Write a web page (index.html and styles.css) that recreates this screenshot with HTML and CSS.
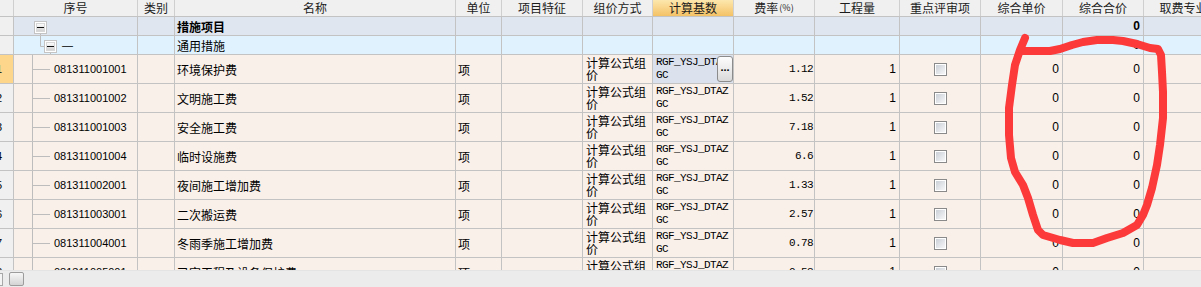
FILE: index.html
```html
<!DOCTYPE html>
<html lang="zh-CN">
<head>
    <meta charset="UTF-8">
    <title>措施项目</title>
    <link rel="stylesheet" href="styles.css">
</head>
<body>
    <div class="grid">
        <div class="row head">
            <div class="cell num"></div>
            <div class="cell">序号</div>
            <div class="cell">类别</div>
            <div class="cell">名称</div>
            <div class="cell">单位</div>
            <div class="cell">项目特征</div>
            <div class="cell">组价方式</div>
            <div class="cell active">计算基数</div>
            <div class="cell">费率<small>(%)</small></div>
            <div class="cell">工程量</div>
            <div class="cell">重点评审项</div>
            <div class="cell">综合单价</div>
            <div class="cell">综合合价</div>
            <div class="cell">取费专业</div>
        </div>

        <div class="row group">
            <div class="cell num"></div>
            <div class="cell code tree">
                <svg width="40" height="18" viewBox="0 0 40 18">
                    <defs>
                        <linearGradient id="btn1" x1="0" y1="0" x2="0" y2="1">
                            <stop offset="0" stop-color="#ffffff"/>
                            <stop offset="1" stop-color="#cfcfcf"/>
                        </linearGradient>
                    </defs>
                    <line x1="8.5" y1="16" x2="8.5" y2="18" stroke="#bdbdbd"/>
                    <rect x="2.5" y="4.5" width="12" height="12" fill="#fff" stroke="#c4c4c4"/>
                    <rect x="4.5" y="6.5" width="8" height="8" fill="url(#btn1)" stroke="#d8d8d8"/>
                    <line x1="5" y1="10.5" x2="12" y2="10.5" stroke="#111"/>
                </svg>
            </div>
            <div class="cell"></div>
            <div class="cell name"><b>措施项目</b></div>
            <div class="cell"></div>
            <div class="cell"></div>
            <div class="cell"></div>
            <div class="cell"></div>
            <div class="cell"></div>
            <div class="cell"></div>
            <div class="cell"></div>
            <div class="cell"></div>
            <div class="cell value"><b>0</b></div>
            <div class="cell"></div>
        </div>

        <div class="row sub">
            <div class="cell num"></div>
            <div class="cell code tree">
                <svg width="40" height="18" viewBox="0 0 40 18">
                    <defs>
                        <linearGradient id="btn2" x1="0" y1="0" x2="0" y2="1">
                            <stop offset="0" stop-color="#ffffff"/>
                            <stop offset="1" stop-color="#cfcfcf"/>
                        </linearGradient>
                    </defs>
                    <path d="M8.5 0 V10.5 H13" fill="none" stroke="#bdbdbd"/>
                    <line x1="18.5" y1="16" x2="18.5" y2="18" stroke="#bdbdbd"/>
                    <rect x="12.5" y="4.5" width="12" height="12" fill="#fff" stroke="#c4c4c4"/>
                    <rect x="14.5" y="6.5" width="8" height="8" fill="url(#btn2)" stroke="#d8d8d8"/>
                    <line x1="15" y1="10.5" x2="22" y2="10.5" stroke="#111"/>
                </svg>
                <span class="dash">—</span>
            </div>
            <div class="cell"></div>
            <div class="cell name">通用措施</div>
            <div class="cell"></div>
            <div class="cell"></div>
            <div class="cell"></div>
            <div class="cell"></div>
            <div class="cell"></div>
            <div class="cell"></div>
            <div class="cell"></div>
            <div class="cell"></div>
            <div class="cell value">0</div>
            <div class="cell"></div>
        </div>

        <div class="row item">
            <div class="cell num current">1</div>
            <div class="cell code"><span class="branch"></span>081311001001</div>
            <div class="cell"></div>
            <div class="cell name">环境保护费</div>
            <div class="cell unit">项</div>
            <div class="cell"></div>
            <div class="cell way">计算公式组价</div>
            <div class="cell base selected">RGF_YSJ_DTAZGC<span class="more">...</span></div>
            <div class="cell rate">1.12</div>
            <div class="cell value">1</div>
            <div class="cell check"><span class="box"></span></div>
            <div class="cell value">0</div>
            <div class="cell value">0</div>
            <div class="cell"></div>
        </div>

        <div class="row item">
            <div class="cell num">2</div>
            <div class="cell code"><span class="branch"></span>081311001002</div>
            <div class="cell"></div>
            <div class="cell name">文明施工费</div>
            <div class="cell unit">项</div>
            <div class="cell"></div>
            <div class="cell way">计算公式组价</div>
            <div class="cell base">RGF_YSJ_DTAZGC</div>
            <div class="cell rate">1.52</div>
            <div class="cell value">1</div>
            <div class="cell check"><span class="box"></span></div>
            <div class="cell value">0</div>
            <div class="cell value">0</div>
            <div class="cell"></div>
        </div>

        <div class="row item">
            <div class="cell num">3</div>
            <div class="cell code"><span class="branch"></span>081311001003</div>
            <div class="cell"></div>
            <div class="cell name">安全施工费</div>
            <div class="cell unit">项</div>
            <div class="cell"></div>
            <div class="cell way">计算公式组价</div>
            <div class="cell base">RGF_YSJ_DTAZGC</div>
            <div class="cell rate">7.18</div>
            <div class="cell value">1</div>
            <div class="cell check"><span class="box"></span></div>
            <div class="cell value">0</div>
            <div class="cell value">0</div>
            <div class="cell"></div>
        </div>

        <div class="row item">
            <div class="cell num">4</div>
            <div class="cell code"><span class="branch"></span>081311001004</div>
            <div class="cell"></div>
            <div class="cell name">临时设施费</div>
            <div class="cell unit">项</div>
            <div class="cell"></div>
            <div class="cell way">计算公式组价</div>
            <div class="cell base">RGF_YSJ_DTAZGC</div>
            <div class="cell rate">6.6</div>
            <div class="cell value">1</div>
            <div class="cell check"><span class="box"></span></div>
            <div class="cell value">0</div>
            <div class="cell value">0</div>
            <div class="cell"></div>
        </div>

        <div class="row item">
            <div class="cell num">5</div>
            <div class="cell code"><span class="branch"></span>081311002001</div>
            <div class="cell"></div>
            <div class="cell name">夜间施工增加费</div>
            <div class="cell unit">项</div>
            <div class="cell"></div>
            <div class="cell way">计算公式组价</div>
            <div class="cell base">RGF_YSJ_DTAZGC</div>
            <div class="cell rate">1.33</div>
            <div class="cell value">1</div>
            <div class="cell check"><span class="box"></span></div>
            <div class="cell value">0</div>
            <div class="cell value">0</div>
            <div class="cell"></div>
        </div>

        <div class="row item">
            <div class="cell num">6</div>
            <div class="cell code"><span class="branch"></span>081311003001</div>
            <div class="cell"></div>
            <div class="cell name">二次搬运费</div>
            <div class="cell unit">项</div>
            <div class="cell"></div>
            <div class="cell way">计算公式组价</div>
            <div class="cell base">RGF_YSJ_DTAZGC</div>
            <div class="cell rate">2.57</div>
            <div class="cell value">1</div>
            <div class="cell check"><span class="box"></span></div>
            <div class="cell value">0</div>
            <div class="cell value">0</div>
            <div class="cell"></div>
        </div>

        <div class="row item">
            <div class="cell num">7</div>
            <div class="cell code"><span class="branch"></span>081311004001</div>
            <div class="cell"></div>
            <div class="cell name">冬雨季施工增加费</div>
            <div class="cell unit">项</div>
            <div class="cell"></div>
            <div class="cell way">计算公式组价</div>
            <div class="cell base">RGF_YSJ_DTAZGC</div>
            <div class="cell rate">0.78</div>
            <div class="cell value">1</div>
            <div class="cell check"><span class="box"></span></div>
            <div class="cell value">0</div>
            <div class="cell value">0</div>
            <div class="cell"></div>
        </div>

        <div class="row item">
            <div class="cell num">8</div>
            <div class="cell code"><span class="branch"></span>081311005001</div>
            <div class="cell"></div>
            <div class="cell name">已完工程及设备保护费</div>
            <div class="cell unit">项</div>
            <div class="cell"></div>
            <div class="cell way">计算公式组价</div>
            <div class="cell base">RGF_YSJ_DTAZGC</div>
            <div class="cell rate">0.53</div>
            <div class="cell value">1</div>
            <div class="cell check"><span class="box"></span></div>
            <div class="cell value">0</div>
            <div class="cell value">0</div>
            <div class="cell"></div>
        </div>
    </div>

    <div class="hbar">
        <span class="edge"></span>
        <span class="thumb"></span>
    </div>

    <!-- marca vermelha feita à mão por cima da tabela -->
    <svg class="scribble" width="1201" height="287" viewBox="0 0 1201 287">
        <path d="M1025 38 L1020 50 L1015 65 L1012 85 L1009 108 L1009 135 L1011 158 L1015 172 L1023 185 L1028 198 L1033 215 L1038 230 L1043 235 L1060 240 L1073 243 L1093 243 L1107 238 L1123 233 L1137 225 L1143 215 L1147 205 L1152 188 L1157 165 L1160 145 L1163 118 L1163 92 L1162 72 L1161 55 L1158 49 L1150 48 L1137 44 L1123 41 L1113 40 L1097 40 L1083 42 L1072 45 L1060 49 L1050 51 L1033 51 L1023 51"
              fill="none" stroke="#fc3a3a" stroke-width="8" stroke-linecap="round" stroke-linejoin="round"/>
    </svg>
</body>
</html>
```

FILE: styles.css
```css
body {
    margin: 0;
    width: 1201px;
    height: 287px;
    overflow: hidden;
    position: relative;
    font-family: "Noto Sans CJK SC", "Liberation Sans", sans-serif;
    font-size: 12px;
    color: #000;
    background: #f0f0f0;
}

.grid {
    height: 270px;
    overflow: hidden;
}

.row {
    display: grid;
    grid-template-columns: 14px 124px 37px 281px 46px 81px 70px 81px 81px 85px 81px 82px 81px 80px;
    border-bottom: 1px solid #c3c3c3;
    box-sizing: border-box;
}

.cell {
    display: flex;
    align-items: center;
    border-right: 1px solid #c3c3c3;
    overflow: hidden;
    white-space: nowrap;
    min-width: 0;
}

/* cabeçalho */
.head {
    height: 17px;
    background: #f0f0f0;
    color: #1c1c1c;
}

.head .cell {
    justify-content: center;
    line-height: 16px;
    border-right-color: #cfcfcf;
}

.head small {
    font-size: 9px;
    margin-left: 1px;
}

.head .active {
    background: linear-gradient(#fde7ad, #f4c266);
}

/* linhas de grupo */
.group {
    height: 19px;
    background: #dfe6f0;
}

.sub {
    height: 19px;
    background: #dff2fe;
}

.item {
    height: 29px;
    background: #f9f0ea;
}

.num {
    background: #f0f0f0;
    font-family: "Liberation Sans", sans-serif;
    font-size: 11px;
    text-indent: -4px;
}

.num.current {
    background: #fdd68c;
}

.tree {
    align-items: stretch;
}

.tree svg {
    flex-shrink: 0;
}

.dash {
    align-self: center;
    margin-left: -10px;
    font-family: "Liberation Sans", sans-serif;
}

.code {
    font-family: "Liberation Sans", sans-serif;
    font-size: 11px;
    padding-left: 18px;
}

.branch {
    align-self: stretch;
    width: 17px;
    flex-shrink: 0;
    border-left: 1px solid #bdbdbd;
    background: linear-gradient(#bdbdbd, #bdbdbd) no-repeat 0 14px / 100% 1px;
    margin-right: 4px;
}

.name {
    padding-left: 2px;
}

.unit {
    padding-left: 2px;
}

.way {
    white-space: normal;
    word-break: break-all;
    line-height: 12px;
    padding: 0 3px;
}

.base {
    position: relative;
    white-space: normal;
    word-break: break-all;
    font-family: "Liberation Mono", monospace;
    font-size: 11px;
    letter-spacing: -0.6px;
    line-height: 13px;
    padding: 0 4px 0 3px;
}

.base.selected {
    background: #dbe2ee;
}

.more {
    position: absolute;
    right: 0;
    top: 1px;
    width: 14px;
    height: 24px;
    border: 1px solid #8c8c8c;
    border-radius: 3px;
    background: linear-gradient(#fdfdfd, #dadada);
    font-family: "Liberation Sans", sans-serif;
    font-weight: bold;
    font-size: 11px;
    letter-spacing: 0;
    line-height: 20px;
    text-align: center;
}

.rate {
    justify-content: flex-end;
    padding-right: 1px;
    font-family: "Liberation Mono", monospace;
    font-size: 11px;
    letter-spacing: -0.6px;
}

.value {
    justify-content: flex-end;
    padding-right: 3px;
    font-family: "Liberation Sans", sans-serif;
}

.check {
    justify-content: center;
}

.box {
    width: 11px;
    height: 11px;
    border: 1px solid #8a8a8a;
    box-shadow: inset 0 0 0 1px #fff;
    background: linear-gradient(135deg, #c6ccd4, #fbfbfb);
}

/* barra de rolagem horizontal */
.hbar {
    height: 17px;
    display: flex;
    align-items: center;
    background: #ececec;
    border-top: 1px solid #e4e4e4;
    box-sizing: border-box;
}

.edge {
    width: 2px;
    height: 11px;
    border: 1px solid #a8a8a8;
    border-left: none;
    background: #f4f4f4;
}

.thumb {
    margin-left: 6px;
    width: 13px;
    height: 12px;
    border: 1px solid #9c9c9c;
    border-radius: 2px;
    background: linear-gradient(#f7f7f7, #d4d4d4);
}

.scribble {
    position: absolute;
    left: 0;
    top: 0;
    pointer-events: none;
}
```
